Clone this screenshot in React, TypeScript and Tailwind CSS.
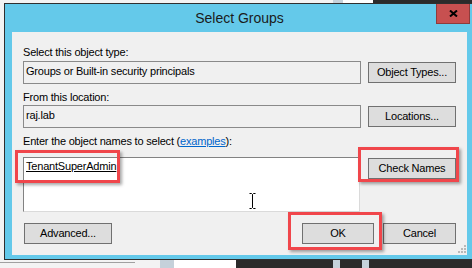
const Btn = ({
  label,
  className = "",
}: {
  label: string;
  className?: string;
}) => (
  <div
    className={`flex h-[21px] items-center justify-center border border-[#707070] bg-[#dddddd] text-[11px] leading-[13px] text-black ${className}`}
  >
    {label}
  </div>
);

const ReadOnlyBox = ({ value }: { value: string }) => (
  <div className="h-[23px] w-[338px] shrink-0 border border-[#8a8a8a] bg-[#f0f0f0] pl-[2px] pt-[3px] text-[11px] leading-[13px] text-black">
    {value}
  </div>
);

const Highlight = ({ className }: { className: string }) => (
  <div
    className={`pointer-events-none absolute border-[3px] border-[#f0464b] shadow-[2px_2px_3px_rgba(0,0,0,0.35)] ${className}`}
  />
);

const App = () => {
  return (
    <div className="relative h-[268px] w-[472px] overflow-hidden bg-[#f3f3f3] font-['Liberation_Sans',Arial,sans-serif] tracking-[-0.2px]">
      {/* desktop strip above */}
      <div className="flex h-[3px]">
        <div className="w-[333px] bg-[#f3f3f3]" />
        <div className="w-[10px] bg-[#c5d1da]" />
        <div className="w-[30px] bg-white" />
        <div className="flex-1 bg-[#2b2b2b]" />
      </div>

      <div className="flex h-[257px]">
        <div className="w-[4px] shrink-0 bg-[#f3f3f3]" />

        {/* dialog window */}
        <div className="flex w-[470px] shrink-0 flex-col border-y border-l border-[#2f2f2f] bg-[#64c9ea]">
          {/* title bar */}
          <div className="relative h-[28px] text-center text-[14px] leading-[28px] tracking-normal text-[#1b1b1b]">
            Select Groups
            <div className="absolute right-[4px] top-0 flex h-[20px] w-[34px] items-center justify-center border border-t-0 border-[#8e3b3b] bg-[#c75050]">
              <svg width="9" height="7" viewBox="0 0 9 7">
                <path
                  d="M1 0.5 L8 6.5 M8 0.5 L1 6.5"
                  stroke="#000"
                  strokeWidth="2"
                />
              </svg>
            </div>
          </div>

          {/* client area */}
          <div className="mx-[7px] flex h-[223px] w-[455px] flex-col bg-[#f0f0f0] px-[11px] pt-[14px] relative">
            <div className="text-[11px] leading-[13px] text-black">
              Select this object type:
            </div>
            <div className="mt-[2px] flex items-start gap-[7px]">
              <ReadOnlyBox value="Groups or Built-in security principals" />
              <Btn label="Object Types..." className="mt-[1px] w-[88px]" />
            </div>

            <div className="mt-[7px] text-[11px] leading-[13px] text-black">
              From this location:
            </div>
            <div className="mt-[1px] flex items-start gap-[7px]">
              <ReadOnlyBox value="raj.lab" />
              <Btn label="Locations..." className="mt-[1px] w-[88px]" />
            </div>

            <div className="mt-[7px] text-[11px] leading-[13px] text-black">
              Enter the object names to select (
              <span className="text-[#0066cc] underline">examples</span>):
            </div>
            <div className="mt-[9px] flex items-start gap-[8px]">
              <div className="relative h-[55px] w-[337px] shrink-0 border border-b-[#dadada] border-l-[#828282] border-r-[#dadada] border-t-[#828282] bg-white pl-[2px] pt-[2px] text-[11px] leading-[13px] text-black">
                <span className="underline">TenantSuperAdmin</span>
                {/* mouse cursor */}
                <svg
                  className="absolute left-[225px] top-[35px]"
                  width="7"
                  height="16"
                  viewBox="0 0 7 16"
                >
                  <path
                    d="M0.5 0.5 H2.5 L3.5 1.5 L4.5 0.5 H6.5 M3.5 1.5 V14.5 M0.5 15.5 H2.5 L3.5 14.5 L4.5 15.5 H6.5"
                    stroke="#000"
                    strokeWidth="1"
                    fill="none"
                  />
                </svg>
              </div>
              <Btn label="Check Names" className="mt-[1px] w-[88px]" />
            </div>

            <div className="mt-[11px] flex items-start">
              <Btn label="Advanced..." className="ml-[1px] w-[88px]" />
              <Btn
                label="OK"
                className="ml-auto w-[72px] border-[#3c7fb1]"
              />
              <Btn label="Cancel" className="ml-[9px] w-[73px]" />
            </div>

            {/* resize grip */}
            <svg
              className="absolute bottom-[2px] right-[1px]"
              width="8"
              height="8"
              viewBox="0 0 8 8"
            >
              <g fill="#b8b8b8">
                <rect x="6" y="0" width="2" height="2" />
                <rect x="3" y="3" width="2" height="2" />
                <rect x="6" y="3" width="2" height="2" />
                <rect x="0" y="6" width="2" height="2" />
                <rect x="3" y="6" width="2" height="2" />
                <rect x="6" y="6" width="2" height="2" />
              </g>
            </svg>
          </div>
        </div>
      </div>

      {/* desktop strip below */}
      <div className="flex h-[8px]">
        <div className="w-[160px] bg-[#f3f3f3] pt-[2px]">
          <div className="h-px w-[135px] bg-[#a0a0a0]" />
        </div>
        <div className="w-[14px] bg-[#c5d1da]" />
        <div className="w-[62px] bg-white" />
        <div className="w-[97px] bg-[#2b2b2b]" />
        <div className="w-[7px] bg-[#c5d1da]" />
        <div className="w-[22px] bg-[#2b2b2b]" />
        <div className="w-[7px] bg-[#c5d1da]" />
        <div className="flex-1 bg-[#2b2b2b]" />
      </div>

      {/* red callouts */}
      <Highlight className="left-[15px] top-[150px] h-[33px] w-[105px]" />
      <Highlight className="left-[358px] top-[147px] h-[35px] w-[101px]" />
      <Highlight className="left-[288px] top-[212px] h-[38px] w-[94px]" />
    </div>
  );
};

export default App;
